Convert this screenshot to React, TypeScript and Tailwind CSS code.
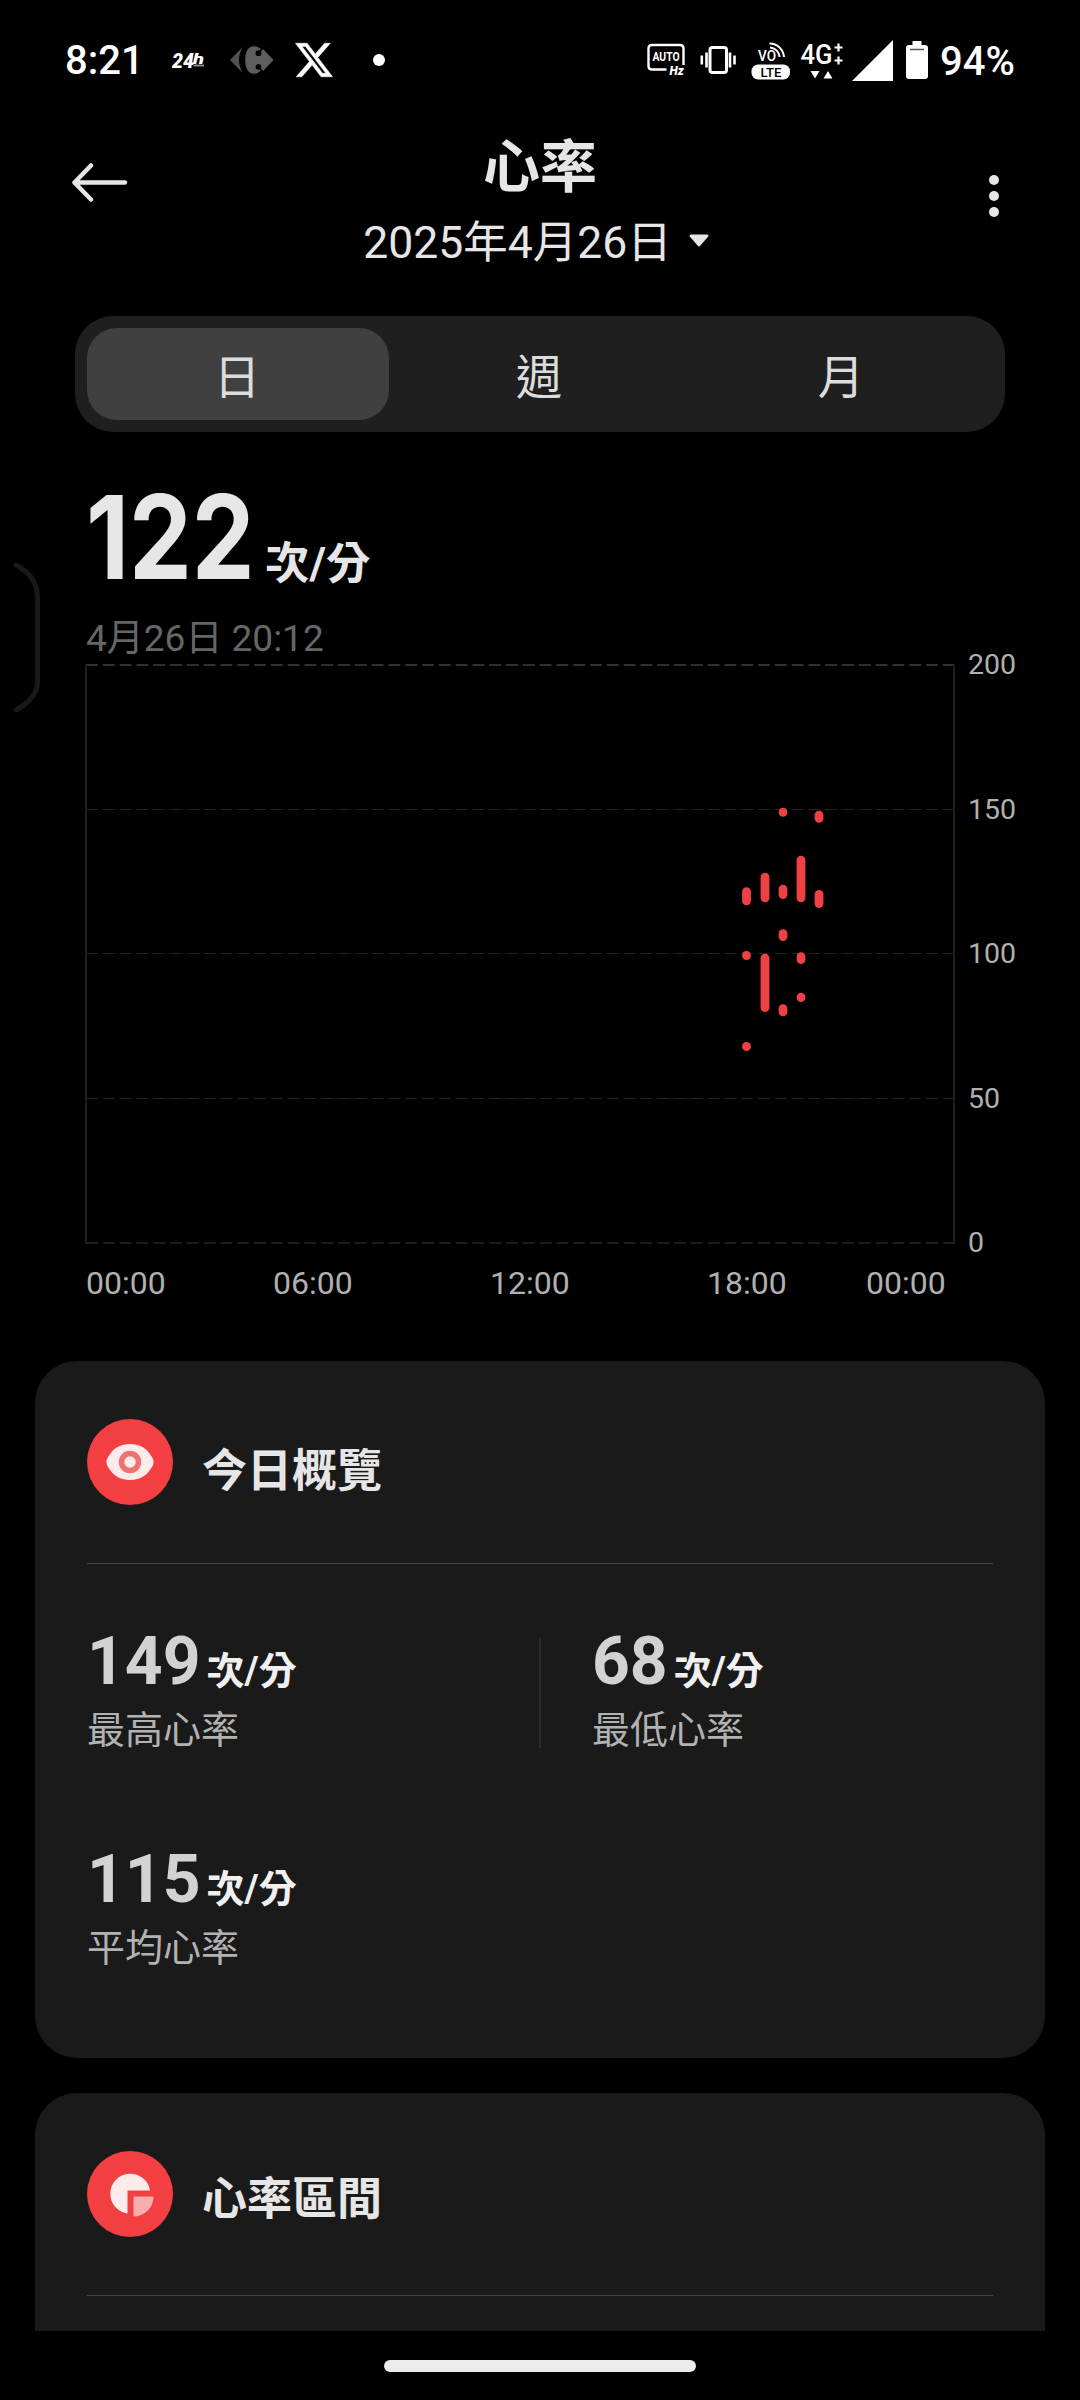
import React from 'react';

const TABS = ['日', '週', '月'];

const Y_LABELS = [200, 150, 100, 50, 0];

const X_LABELS = [
  { text: '00:00', gap: '' },
  { text: '06:00', gap: 'ml-[107px]' },
  { text: '12:00', gap: 'ml-[137px]' },
  { text: '18:00', gap: 'ml-[137px]' },
  { text: '00:00', gap: 'ml-[79px]' },
];

const GRID_Y = [145.5, 289.5, 434.5];

// x centre, top and bottom of every heart rate range, in plot units
const RANGES = [
  [661.5, 223.3, 241.3],
  [661.5, 287, 296],
  [661.5, 378, 387],
  [680, 208.7, 238.3],
  [680, 289.7, 348],
  [698, 143.7, 152.7],
  [698, 220.7, 235],
  [698, 265.3, 277],
  [698, 340.3, 352.3],
  [716, 191.7, 238.3],
  [716, 288.3, 300],
  [716, 328.7, 338],
  [734, 146.7, 158.7],
  [734, 226, 244],
];

const StatusBar = () => (
  <div className="h-[120px] pl-[65px] pr-[65px] flex items-center justify-between text-white">
    <div className="flex items-center">
      <span className="w-[75px] pt-[2px] text-[40px] leading-[40px] font-medium">8:21</span>
      <svg className="ml-[31px] overflow-visible" width="36" height="20" viewBox="0 0 36 20">
        <text x="1" y="17.500" fontFamily="Roboto" fontSize="21" fontWeight="900" fontStyle="italic" fill="#fff" textLength="22" lengthAdjust="spacingAndGlyphs">24</text>
        <text x="22" y="13.500" fontFamily="Roboto" fontSize="15" fontWeight="900" fontStyle="italic" fill="#fff" textLength="11" lengthAdjust="spacingAndGlyphs">h</text>
        <path d="M22.500 15.500h10.500" stroke="#999" strokeWidth="1.800" />
      </svg>
      <svg className="ml-[23px]" width="44" height="28" viewBox="0 0 44 28">
        <path d="M0 14L12.500 1Q9 8 9 14T12.500 27Z" fill="#505050" />
        <path d="M24 0.300C18 0.300 15.200 6 15.200 14S18 27.700 24 27.700C27 27.700 29 26.500 31 24.500L33 25L43.500 14L33 3L31 3.500C29 1.500 27 0.300 24 0.300Z" fill="#5e5e5e" />
        <path d="M28 7.500L32.500 2.500M28 20.500L32.500 25.500" stroke="#000" strokeWidth="1.500" />
        <circle cx="28.500" cy="7.200" r="2.900" fill="#000" />
        <circle cx="28.500" cy="20.800" r="2.900" fill="#000" />
      </svg>
      <svg className="ml-[21px]" width="38" height="36" viewBox="1 2 22.1 20">
        <path
          d="M18.244 2.25h3.308l-7.227 8.26 8.502 11.24H16.17l-5.214-6.817L4.99 21.75H1.68l7.73-8.835L1.254 2.25H8.08l4.713 6.231zm-1.161 17.52h1.833L7.084 4.126H5.117z"
          fill="#fff"
          stroke="#fff"
          strokeWidth="0.3"
        />
      </svg>
      <div className="ml-[40px] w-3 h-3 rounded-full bg-white" />
    </div>

    <div className="flex items-center">
      {/* Auto refresh rate */}
      <svg width="40" height="36" viewBox="0 0 40 36" fill="none">
        <path d="M20 26H5.500Q2 26 2 22.500V5Q2 1.500 5.500 1.500H33.500Q37 1.500 37 5V21.500" transform="translate(-0.500 1.500)" stroke="#fff" strokeWidth="2.400" />
        <text x="5.500" y="19" fontFamily="Roboto" fontSize="12.500" fontWeight="700" fill="#fff" textLength="27" lengthAdjust="spacingAndGlyphs">AUTO</text>
        <text x="22.500" y="33" fontFamily="Roboto" fontSize="12" fontWeight="900" fontStyle="italic" fill="#fff">Hz</text>
      </svg>
      {/* Vibrate */}
      <svg className="ml-[13px]" width="36" height="28" viewBox="0 0 36 28" fill="none" stroke="#fff">
        <rect x="10" y="1.500" width="16.500" height="25" rx="2.500" strokeWidth="3" />
        <path d="M6.500 6.500v15M30 6.500v15" strokeWidth="2.600" />
        <path d="M1.800 9.500v9M34.500 9.500v9" strokeWidth="2.600" />
      </svg>
      {/* VoLTE */}
      <svg className="ml-[15px]" width="40" height="40" viewBox="0 0 40 40" fill="none">
        <text x="7" y="21" fontFamily="Roboto" fontSize="15" fontWeight="500" fill="#fff" textLength="18" lengthAdjust="spacingAndGlyphs">VO</text>
        <path d="M18.500 3.500A14.500 14.500 0 0 1 33 17M19 7.500A10 10 0 0 1 28.500 17" stroke="#fff" strokeWidth="2" />
        <rect x="0.500" y="24.500" width="38.500" height="15" rx="6.500" fill="#fff" />
        <text x="9.500" y="36.500" fontFamily="Roboto" fontSize="12.500" fontWeight="500" fill="#000" textLength="21" lengthAdjust="spacingAndGlyphs">LTE</text>
      </svg>
      {/* 4G+ */}
      <svg className="ml-[9px]" width="45" height="40" viewBox="0 0 45 40" fill="#fff">
        <text x="0.500" y="24" fontFamily="Roboto" fontSize="27" fontWeight="500" textLength="32" lengthAdjust="spacingAndGlyphs">4G</text>
        <path d="M34.500 7.500h8M38.500 3.500v8M34.500 20.500h8M38.500 16.500v8" stroke="#fff" strokeWidth="2.200" />
        <path d="M10.500 31h9l-4.500 7.500zM23.500 38.500h9L28 31z" />
      </svg>
      <svg className="ml-[7px]" width="41" height="41" viewBox="0 0 41 41">
        <path d="M41 0v41H0z" fill="#fff" />
      </svg>
      <svg className="ml-[13px]" width="22" height="38" viewBox="0 0 22 38">
        <path d="M6.500 0h9v4H19q3 0 3 3v28q0 3-3 3H3q-3 0-3-3V7q0-3 3-3h3.500z" fill="#fff" />
        <path d="M4 8.500h14" stroke="#555" strokeWidth="1.500" />
      </svg>
      <span className="ml-[12px] w-[75px] pt-[4px] text-[40px] leading-[40px] font-medium whitespace-nowrap">94%</span>
    </div>
  </div>
);

const Header = () => (
  <div className="h-[196px] px-[71px] pt-4 flex justify-between text-[#e6e6e6]">
    <svg className="mt-[27px]" width="58" height="40" viewBox="0 0 58 40" fill="none">
      <path d="M20 2.500L3.500 19.500L20 36.500M3.500 19.500H54" stroke="currentColor" strokeWidth="4.500" strokeLinecap="round" strokeLinejoin="round" />
    </svg>
    <div className="flex flex-col items-center">
      <h1 className="text-[57px] leading-[64px] font-bold">心率</h1>
      <div className="mt-[17px] ml-[-8px] flex items-center gap-[17px]">
        <span className="text-[44.5px] leading-[52px]">2025年4月26日</span>
        <svg className="mt-[-6px]" width="20" height="13" viewBox="0 0 20 13">
          <path d="M2 0.500H18Q20.500 1 18.800 3L11.200 11.800Q10 13 8.800 11.800L1.200 3Q-0.500 1 2 0.500Z" fill="currentColor" />
        </svg>
      </div>
    </div>
    <div className="w-[58px] pt-[39px] pr-[10px] flex flex-col items-end gap-[6px]">
      <div className="w-[10px] h-[10px] rounded-full bg-[#e6e6e6]" />
      <div className="w-[10px] h-[10px] rounded-full bg-[#e6e6e6]" />
      <div className="w-[10px] h-[10px] rounded-full bg-[#e6e6e6]" />
    </div>
  </div>
);

const Chart = () => (
  <div className="mt-[3px] pl-[85px]">
    <div className="flex">
      <svg width="870" height="581" viewBox="0 0 870 581" fill="none">
        <path d="M1 1H869" stroke="#303030" strokeWidth="2" strokeDasharray="12 4.800" />
        <path d="M1 579H869" stroke="#1c1c1c" strokeWidth="2" strokeDasharray="12 4.800" />
        {GRID_Y.map(y => (
          <path key={y} d={`M1 ${y}H869`} stroke="#242424" strokeWidth="1" strokeDasharray="12 4.800" />
        ))}
        <path d="M1 0V580M869 0V580" stroke="#1e1e1e" strokeWidth="2" />
        {RANGES.map(([x, top, bottom]) => (
          <rect key={`${x}-${top}`} x={x - 4.4} y={top} width="8.800" height={bottom - top} rx="4.400" fill="#ee4144" />
        ))}
      </svg>
      <div className="ml-[13px] mt-[-13px] h-[606px] flex flex-col justify-between text-[28.500px] leading-[28px] text-[#b0b0b0]">
        {Y_LABELS.map(v => (
          <span key={v}>{v}</span>
        ))}
      </div>
    </div>
    <div className="mt-[6px] pl-[1px] h-10 flex text-[32px] leading-[40px] text-[#b0b0b0]">
      {X_LABELS.map((l, i) => (
        <span key={i} className={`w-20 ${l.gap}`}>{l.text}</span>
      ))}
    </div>
  </div>
);

const CardHeader = ({ icon, title, titleClass }: { icon: React.ReactNode; title: string; titleClass: string }) => (
  <div className="h-[203px] pt-[58px] border-b border-[#444]">
    <div className="h-[86px] flex items-center">
      <div className="w-[86px] h-[86px] rounded-full bg-[#f33f41] flex items-center justify-center">{icon}</div>
      <h2 className={`ml-[29px] text-[45px] leading-[52px] font-bold text-[#e6e6e6] ${titleClass}`}>{title}</h2>
    </div>
  </div>
);

const Stat = ({ value, label }: { value: number; label: string }) => (
  <div className="h-[123px]">
    <div className="flex items-baseline gap-[6px] font-bold">
      <span className="text-[66px] leading-[64px] text-[#d2d2d2]">{value}</span>
      <span className="text-[38px] leading-[40px] text-[#f0f0f0]">次/分</span>
    </div>
    <div className="mt-[14px] text-[38px] leading-[44px] text-[#b2b2b2]">{label}</div>
  </div>
);

export default function App() {
  return (
    <div
      lang="zh-Hant"
      className="relative w-[1080px] h-[2400px] overflow-hidden bg-black flex flex-col font-['Roboto','Noto_Sans_CJK_TC',sans-serif]"
    >
      <StatusBar />
      <Header />

      {/* Day / week / month */}
      <div className="mx-[75px] h-[116px] shrink-0 p-3 rounded-[38px] bg-[#1f1f1f] flex">
        {TABS.map((t, i) => (
          <button
            key={t}
            className={`flex-1 rounded-[30px] pt-[8px] pr-[2px] text-[46.5px] leading-[50px] text-[#dcdcdc] ${i === 0 ? 'bg-[#404040]' : ''}`}
          >
            {t}
          </button>
        ))}
      </div>

      {/* Latest reading */}
      <div className="mt-[55px] pl-[86px]">
        <div className="h-[100px] flex items-baseline font-bold text-[#e6e6e6]">
          <span className="w-[179px] font-['Inter'] text-[116px] leading-[100px] origin-left scale-x-[0.86]">122</span>
          <span className="text-[44.5px] leading-[50px]">次/分</span>
        </div>
        <div className="mt-[30px] text-[37px] leading-[44px] text-[#666]">4月26日 20:12</div>
      </div>

      <Chart />

      <div className="mt-[58px] px-[35px] flex-1 min-h-0 overflow-hidden flex flex-col gap-[35px]">
        <div className="h-[697px] shrink-0 px-[52px] rounded-[42px] bg-[#1a1a1a]">
          <CardHeader
            title="今日概覽"
            titleClass="mt-[20px]"
            icon={
              <svg width="50" height="38" viewBox="0 0 50 38">
                <path d="M25 1C36 1 42 6 47 14Q50 19 47 24C42 32 36 37 25 37S8 32 3 24Q0 19 3 14C8 6 14 1 25 1Z" fill="#fdeaea" />
                <circle cx="25" cy="19" r="8.500" fill="#fdeaea" stroke="#ee7173" strokeWidth="5.500" />
              </svg>
            }
          />
          <div className="pt-[66px] grid grid-cols-[452px_1fr] gap-y-[95px]">
            <Stat value={149} label="最高心率" />
            <div className="flex">
              <div className="mt-[8px] w-[2px] h-[110px] bg-[#2c2c2c]" />
              <div className="ml-[51px]">
                <Stat value={68} label="最低心率" />
              </div>
            </div>
            <Stat value={115} label="平均心率" />
          </div>
        </div>

        <div className="h-[400px] shrink-0 px-[52px] rounded-[42px] bg-[#1a1a1a]">
          <CardHeader
            title="心率區間"
            titleClass="mt-[12px]"
            icon={
              <svg className="ml-[5px] mt-[3px]" width="46" height="46" viewBox="0 0 46 46">
                <path d="M17.500 17.500H40A20 20 0 1 0 17.500 40.500Z" fill="#fdeaea" />
                <path d="M23.500 23.500H43.500A20 20 0 0 1 23.500 43.500Z" fill="#f8adae" />
              </svg>
            }
          />
        </div>
      </div>

      {/* Gesture bar */}
      <div className="h-[69px] shrink-0 flex justify-center">
        <div className="mt-[29px] w-[312px] h-3 rounded-full bg-[#ebebeb]" />
      </div>

      {/* Edge panel handle */}
      <svg className="absolute left-[12px] top-[560px]" width="32" height="156" viewBox="0 0 32 156" fill="none">
        <path d="M4 5Q25.500 16 25.500 38V122Q25.500 138 4 150" stroke="#191919" strokeWidth="5" strokeLinecap="round" />
      </svg>
    </div>
  );
}
